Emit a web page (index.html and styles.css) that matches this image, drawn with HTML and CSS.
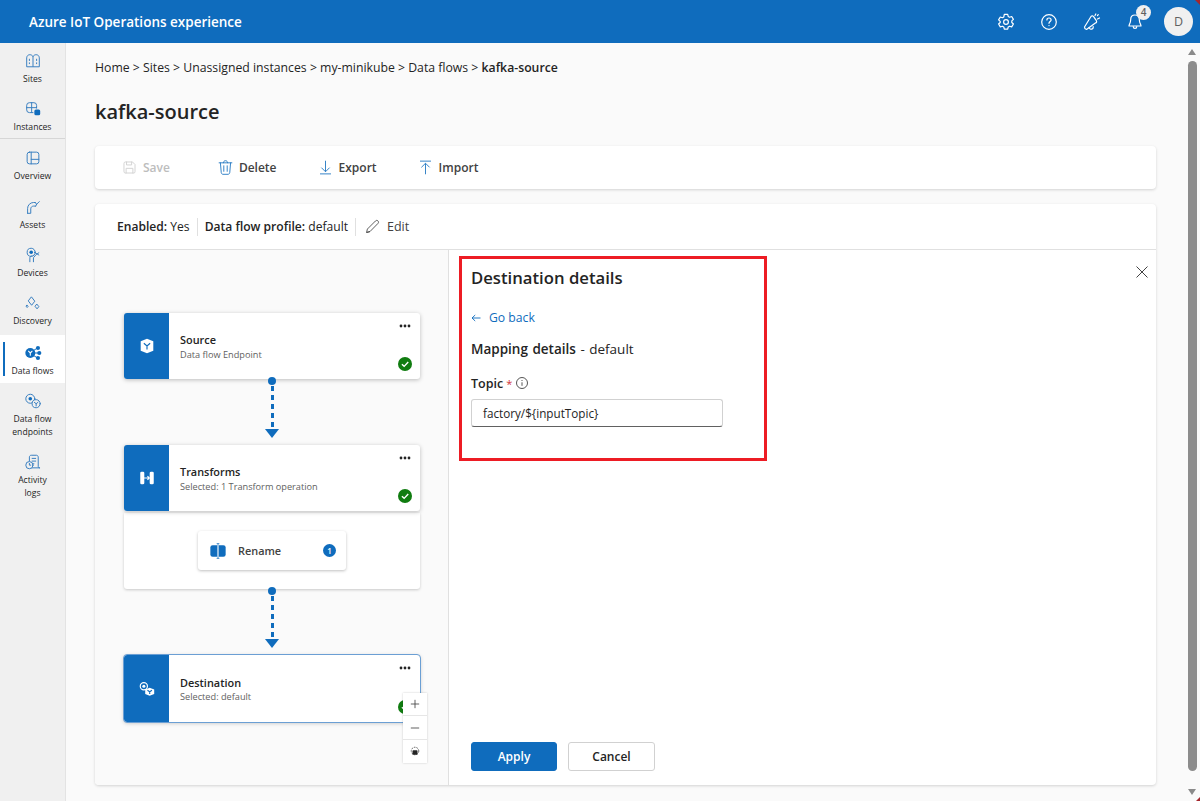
FILE: index.html
```html
<!DOCTYPE html>
<html lang="en">
<head>
  <meta charset="UTF-8">
  <title>Azure IoT Operations experience</title>
  <link rel="stylesheet" href="styles.css">
</head>
<body>
  <header class="topbar">
    <div class="brand">Azure IoT Operations experience</div>
    <div class="top-actions">
      <svg class="top-icon" viewBox="0 0 20 20"><path d="M8.300 2.300h3.400l.5 2.100 1.400.8 2.100-.7 1.700 2.900-1.600 1.500v1.600l1.600 1.500-1.700 2.900-2.100-.7-1.400.8-.5 2.100H8.300l-.5-2.100-1.400-.8-2.100.7-1.700-2.900 1.600-1.500V9.400L2.600 7.900l1.700-2.900 2.100.7 1.400-.8z"/><circle cx="10" cy="10" r="2.400"/></svg>
      <svg class="top-icon" viewBox="0 0 20 20"><circle cx="10" cy="10" r="7.300"/><path d="M7.900 8c0-1.300 1-2 2.100-2s2.100.8 2.100 1.900c0 1.600-2.100 1.700-2.100 3.400"/><circle class="dot" cx="10" cy="13.600" r=".7"/></svg>
      <svg class="top-icon" viewBox="0 0 20 20"><path d="M2.500 15 9 4.500c1-1.200 2-.8 2.800.3l2.400 3.500c.8 1.300.5 2.400-.8 2.700L4.500 17.500c-1.200-.2-2-1.300-2-2.500z"/><path d="M7 15.500c.3 1.500 2 2.200 3.500 1.200.6-.4.900-1.200.7-2.200"/><path d="M13 3.500l.8-1.500M15.500 7l2-1M15.500 3.500l.8-.8"/></svg>
      <div class="bell">
        <svg class="top-icon" viewBox="0 0 20 20"><path d="M10 3c-2.800 0-4.300 2-4.300 4.500 0 3.500-1.700 5-1.700 6.500h12c0-1.500-1.700-3-1.700-6.500C14.300 5 12.800 3 10 3z"/><path d="M8.200 14.500c0 1.200.8 1.900 1.800 1.900s1.800-.7 1.800-1.900"/></svg>
        <span class="bell-count">4</span>
      </div>
      <div class="avatar">D</div>
    </div>
  </header>

  <div class="shell">
    <nav class="sidenav">
      <a class="nav-item">
        <svg class="nav-icon" viewBox="0 0 20 20"><path d="M3 16V6.500C3 4.500 4.500 3 6.500 3c1.500 0 2.800.8 3.500 2 .7-1.200 2-2 3.500-2C15.500 3 17 4.500 17 6.500V16zM10 5v11M6 8v1.500M6 12v1M14 8v1.500M14 12v1"/></svg>
        <span>Sites</span>
      </a>
      <a class="nav-item nav-last">
        <svg class="nav-icon" viewBox="0 0 20 20"><path d="M10 14H6a3 3 0 0 1-3-3V6a3 3 0 0 1 3-3h5a3 3 0 0 1 3 3v3M3 8.500h11M8.500 3v11"/><rect class="solid" x="11.500" y="10.500" width="6.500" height="6.500" rx="1.800"/></svg>
        <span>Instances</span>
      </a>
      <a class="nav-item nav-tall">
        <svg class="nav-icon" viewBox="0 0 20 20"><rect x="3.500" y="3.500" width="13" height="13" rx="2.500"/><path d="M8 3.500v13M8 11.500h8.500"/></svg>
        <span>Overview</span>
      </a>
      <a class="nav-item">
        <svg class="nav-icon" viewBox="0 0 20 20"><path d="M4 17v-5.500C4 8 7 5 10.500 5h2M4 17h3.500v-5c0-1.800 1.500-3 3-3h2.500M12.500 5l1.500 2 3-3M13 9l1-2"/></svg>
        <span>Assets</span>
      </a>
      <a class="nav-item">
        <svg class="nav-icon" viewBox="0 0 20 20"><circle cx="8" cy="7" r="4.500"/><circle class="solid" cx="8" cy="7" r="2"/><path d="M6.500 17.500v-4c0-1.500 1-2.500 2.500-2.500M10.500 17.500V13l3-3.500 3-2M11.500 7l5 3"/></svg>
        <span>Devices</span>
      </a>
      <a class="nav-item nav-before-active">
        <svg class="nav-icon" viewBox="0 0 20 20"><path d="M8.500 3.500 12 8l-3.500 4.500L5 8zM14.500 11.500l2 2.500-2 2.500-2-2.500zM3.500 12.500l1 1.300-1 1.200-1-1.200z"/></svg>
        <span>Discovery</span>
      </a>
      <a class="nav-item active">
        <svg class="nav-icon filled" viewBox="0 0 20 20"><circle cx="7" cy="10" r="5.500"/><circle cx="15.500" cy="4.500" r="2.300"/><circle cx="17" cy="10" r="2.300"/><circle cx="15.500" cy="15.500" r="2.300"/><path class="link" d="M11 7l3-2M12 10h4M11 13l3 2"/><path class="cut" d="M5 8l2 2 2-2M7 10v2.500"/></svg>
        <span>Data flows</span>
      </a>
      <a class="nav-item">
        <svg class="nav-icon" viewBox="0 0 20 20"><circle cx="7" cy="7.500" r="5"/><circle class="solid" cx="7" cy="7.500" r="2"/><circle class="bg-fill" cx="13.500" cy="13" r="4.500"/><path d="M11.500 11.500l2 1.500 2-1.500M13.500 13v2.500"/></svg>
        <span>Data flow<br>endpoints</span>
      </a>
      <a class="nav-item">
        <svg class="nav-icon" viewBox="0 0 20 20"><path d="M6 9V4.500C6 3.500 6.800 2.500 8 2.500h6c1 0 1.800 1 1.800 2v10.500c0 1.300 1 1.500 2 1.500H8M9 6h4M9 9h4M9 12h2"/><circle class="bg-fill" cx="6" cy="13.500" r="4"/><path d="M6 11.500v2h1.500"/></svg>
        <span>Activity<br>logs</span>
      </a>
    </nav>

    <main class="content">
      <div class="breadcrumb">Home &gt; Sites &gt; Unassigned instances &gt; my-minikube &gt; Data flows &gt; <b>kafka-source</b></div>
      <h1 class="page-title">kafka-source</h1>

      <div class="toolbar">
        <button class="tool disabled">
          <svg class="tool-icon" viewBox="0 0 20 20"><path d="M3.500 5a1.500 1.500 0 0 1 1.500-1.500h8.500l3 3V15a1.500 1.500 0 0 1-1.500 1.500H5A1.500 1.500 0 0 1 3.500 15zM6.500 3.500v3.500h6V3.500M6 16.500v-5.500h8v5.500"/></svg>
          Save
        </button>
        <button class="tool">
          <svg class="tool-icon" viewBox="0 0 20 20"><path d="M2.500 4.500h15M7.500 4.500C7.500 3 8.500 2 10 2s2.500 1 2.500 2.500M4 4.500l1 11.500c.1 1 .9 2 2 2h6c1.100 0 1.900-1 2-2l1-11.500M8 8v6.500M12 8v6.500"/></svg>
          Delete
        </button>
        <button class="tool">
          <svg class="tool-icon" viewBox="0 0 20 20"><path d="M4 17.500h12M10 2.500v12M5.500 10.500l4.500 4.500 4.500-4.500"/></svg>
          Export
        </button>
        <button class="tool">
          <svg class="tool-icon" viewBox="0 0 20 20"><path d="M4 2.500h12M10 17.500v-12M5.500 9.500 10 5l4.500 4.500"/></svg>
          Import
        </button>
      </div>

      <section class="card">
        <div class="card-head">
          <span class="meta"><b>Enabled:</b> Yes</span>
          <span class="meta"><b>Data flow profile:</b> default</span>
          <span class="meta-edit">
            <svg class="edit-icon" viewBox="0 0 20 20"><path d="M3 17l1-4L13.500 3.500c1-1 2.300-.9 3 0s.8 2-.1 2.900L7 16z"/><path d="M3 17l4-1"/></svg>
            Edit
          </span>
        </div>

        <div class="card-body">
          <div class="canvas">
            <div class="node">
              <div class="node-side"><svg class="node-glyph" viewBox="0 0 20 20"><path class="wht" d="M10 2 17 4.800v10.400L10 18 3 15.200V4.800z"/><path class="blu" d="M6.500 7 10 10l3.500-3M10 10v4"/></svg></div>
              <div class="node-text"><div class="node-name">Source</div><div class="node-sub">Data flow Endpoint</div></div>
              <svg class="more" viewBox="0 0 12 4"><circle cx="2" cy="2" r="1.400"/><circle cx="6" cy="2" r="1.400"/><circle cx="10" cy="2" r="1.400"/></svg>
              <span class="check"><svg viewBox="0 0 10 10"><path d="M2.800 5.200 4.400 6.700 7.300 3.600"/></svg></span>
            </div>

            <div class="connector"><i class="pin"></i><i class="dash"></i><i class="arrow"></i></div>

            <div class="node">
              <div class="node-side"><svg class="node-glyph" viewBox="0 0 20 20"><rect class="wht" x="2.500" y="3" width="4.500" height="14" rx="1.500"/><rect class="wht" x="13" y="3" width="4.500" height="14" rx="1.500"/><path class="line-w" d="M6 10h6.500M10.500 8l2 2-2 2"/></svg></div>
              <div class="node-text"><div class="node-name">Transforms</div><div class="node-sub">Selected: 1 Transform operation</div></div>
              <svg class="more" viewBox="0 0 12 4"><circle cx="2" cy="2" r="1.400"/><circle cx="6" cy="2" r="1.400"/><circle cx="10" cy="2" r="1.400"/></svg>
              <span class="check"><svg viewBox="0 0 10 10"><path d="M2.800 5.200 4.400 6.700 7.300 3.600"/></svg></span>
            </div>
            <div class="transform-box">
              <div class="op">
                <svg class="op-icon" viewBox="0 0 20 20"><path d="M9 3.500H4A2.500 2.500 0 0 0 1.500 6v8A2.500 2.500 0 0 0 4 16.500h5z"/><path d="M11 3.500h5A2.500 2.500 0 0 1 18.500 6v8a2.500 2.500 0 0 1-2.500 2.500h-5z"/><path class="thin" d="M8.500 1.800h3M8.500 18.200h3M10 1.800v16.400"/></svg>
                <span class="op-name">Rename</span>
                <span class="op-count">1</span>
              </div>
            </div>

            <div class="connector"><i class="pin"></i><i class="dash"></i><i class="arrow"></i></div>

            <div class="node selected">
              <div class="node-side"><svg class="node-glyph" viewBox="0 0 20 20"><circle class="line-w" cx="6.500" cy="7" r="4"/><circle class="wht" cx="6.500" cy="7" r="1.700"/><path class="wht" d="M13 8.500 18 10.500v5L13 17.500 8 15.500v-5z"/><path class="blu" d="M10.500 11.500 13 13l2.500-1.500M13 13v2.500"/></svg></div>
              <div class="node-text"><div class="node-name">Destination</div><div class="node-sub">Selected: default</div></div>
              <svg class="more" viewBox="0 0 12 4"><circle cx="2" cy="2" r="1.400"/><circle cx="6" cy="2" r="1.400"/><circle cx="10" cy="2" r="1.400"/></svg>
              <span class="check"><svg viewBox="0 0 10 10"><path d="M2.800 5.200 4.400 6.700 7.300 3.600"/></svg></span>
            </div>

            <div class="zoom-ctrl">
              <button class="zoom-btn"><svg viewBox="0 0 12 12"><path d="M6 1v10M1 6h10"/></svg></button>
              <button class="zoom-btn"><svg viewBox="0 0 12 12"><path d="M1 6h10"/></svg></button>
              <button class="zoom-btn"><svg viewBox="0 0 12 12"><circle cx="6" cy="6" r="4.500" stroke-dasharray="2 1.200"/><rect class="lock" x="3" y="5" width="6" height="5.500" rx="1"/></svg></button>
            </div>
          </div>

          <aside class="details">
            <svg class="close" viewBox="0 0 12 12"><path d="M.5.500l11 11M11.500.500l-11 11"/></svg>
            <h2 class="details-title">Destination details</h2>
            <a class="back"><svg class="back-arrow" viewBox="0 0 10 10"><path d="M9.500 5H1M4.200 2 1 5l3.200 3"/></svg>Go back</a>
            <div class="mapping"><b>Mapping details</b> - default</div>
            <label class="field-label"><b>Topic</b> <em>*</em>
              <svg class="info" viewBox="0 0 14 14"><circle cx="7" cy="7" r="5.500"/><path d="M7 6.300v3.500M7 4v1"/></svg>
            </label>
            <div class="text-input">factory/${inputTopic}</div>
            <div class="details-foot">
              <button class="btn primary">Apply</button>
              <button class="btn">Cancel</button>
            </div>
          </aside>
        </div>
      </section>
    </main>

    <div class="scrollbar">
      <i class="sb-up"></i>
      <i class="sb-thumb"></i>
      <i class="sb-down"></i>
    </div>
  </div>

  <div class="callout"></div>
  <i class="corner corner-top"></i>
  <i class="corner corner-bottom"></i>
</body>
</html>
```

FILE: styles.css
```css
* {
  box-sizing: border-box;
}

html, body {
  margin: 0;
  height: 801px;
  overflow: hidden;
}

body {
  font-family: "Open Sans", "Liberation Sans", sans-serif;
  font-size: 12.5px;
  color: #242424;
  background-color: #fafafa;
}

button {
  font: inherit;
  color: inherit;
  background: none;
  border: 0;
  padding: 0;
}

b {
  font-weight: 600;
}

/* top bar */
.topbar {
  height: 43px;
  background-color: #0f6cbd;
  color: #fff;
  display: flex;
  align-items: center;
  justify-content: space-between;
  padding: 0 7px 0 29px;
}

.brand {
  font-size: 13.5px;
  font-weight: 600;
}

.top-actions {
  display: flex;
  align-items: center;
  gap: 23px;
}

.top-icon {
  width: 20px;
  height: 20px;
  display: block;
  fill: none;
  stroke: #fff;
  stroke-width: 1.2;
  stroke-linejoin: round;
  stroke-linecap: round;
}

.top-icon .dot {
  fill: #fff;
  stroke: none;
}

.bell {
  position: relative;
}

.bell-count {
  position: absolute;
  top: -7px;
  left: 11px;
  width: 15px;
  height: 15px;
  border-radius: 50%;
  background-color: #f0f0f0;
  color: #616161;
  font-size: 10px;
  font-weight: 600;
  line-height: 15px;
  text-align: center;
}

.avatar {
  width: 29px;
  height: 29px;
  margin-left: -4px;
  border-radius: 50%;
  background-color: #f0f0f0;
  color: #616161;
  font-size: 12.5px;
  line-height: 29px;
  text-align: center;
}

/* layout under the bar */
.shell {
  display: flex;
  height: 758px;
}

.sidenav {
  width: 66px;
  flex: none;
  background-color: #f0f0f0;
  border-right: 1px solid #e3e3e3;
}

.nav-item {
  position: relative;
  display: flex;
  flex-direction: column;
  align-items: center;
  padding: 9px 2px 5.500px;
  font-size: 8.6px;
  line-height: 13px;
  text-align: center;
  color: #242424;
}

.nav-item span {
  margin-top: 2.500px;
}

.nav-last {
  border-bottom: 1px solid #d6d6d6;
  padding-bottom: 4.500px;
}

.nav-tall {
  padding-top: 10px;
  padding-bottom: 6.500px;
}

.nav-before-active {
  padding-bottom: 7.500px;
}

.nav-item.active {
  background-color: #fff;
}

.nav-item.active::before {
  content: "";
  position: absolute;
  left: 3px;
  top: 7px;
  width: 2px;
  height: 34px;
  background-color: #0f6cbd;
}

.nav-icon {
  width: 18px;
  height: 18px;
  fill: none;
  stroke: #3a7fc0;
  stroke-width: 1.1;
  stroke-linejoin: round;
  stroke-linecap: round;
}

.nav-icon .solid {
  fill: #0f6cbd;
  stroke: none;
}

.nav-icon .bg-fill {
  fill: #f0f0f0;
}

.nav-icon.filled circle {
  fill: #0f6cbd;
  stroke: none;
}

.nav-icon .link {
  stroke: #0f6cbd;
}

.nav-icon .cut {
  stroke: #fff;
  stroke-width: 1.2;
}

/* main column */
.content {
  flex: 1;
  padding: 15px 29px 0;
  min-width: 0;
}

.breadcrumb {
  line-height: 20px;
  font-size: 12.250px;
}

.page-title {
  margin: 19px 0 0;
  font-size: 20px;
  line-height: 30px;
  font-weight: 600;
}

.toolbar {
  margin-top: 19px;
  height: 43px;
  background-color: #fff;
  border-radius: 4px;
  box-shadow: 0 1px 3px rgba(0, 0, 0, 0.16);
  display: flex;
  align-items: center;
  padding-left: 26px;
  gap: 40px;
}

.tool {
  display: flex;
  align-items: center;
  gap: 5px;
  font-weight: 600;
  font-size: 12px;
  color: #424242;
}

.tool-icon {
  width: 17px;
  height: 17px;
  fill: none;
  stroke: #2a7cc4;
  stroke-width: 1.1;
  stroke-linecap: round;
  stroke-linejoin: round;
}

.tool.disabled {
  color: #bdbdbd;
  margin-right: 7px;
}

.tool.disabled .tool-icon {
  stroke: #d1d1d1;
}

.card {
  margin-top: 15px;
  height: 581px;
  background-color: #fff;
  border-radius: 4px;
  box-shadow: 0 1px 3px rgba(0, 0, 0, 0.16);
  display: flex;
  flex-direction: column;
}

.card-head {
  height: 46px;
  flex: none;
  border-bottom: 1px solid #e0e0e0;
  display: flex;
  align-items: center;
  padding-left: 22px;
  font-size: 12.100px;
}

.meta {
  padding-right: 7px;
  margin-right: 7px;
  border-right: 1px solid #e0e0e0;
  line-height: 18px;
}

.meta-edit {
  display: flex;
  align-items: center;
  gap: 6px;
  margin-left: 1px;
  color: #424242;
  font-size: 12.5px;
}

.edit-icon {
  width: 17px;
  height: 17px;
  fill: none;
  stroke: #424242;
  stroke-width: 1;
  stroke-linejoin: round;
}

.card-body {
  flex: 1;
  display: flex;
  min-height: 0;
}

/* flow diagram */
.canvas {
  position: relative;
  width: 354px;
  flex: none;
  background-color: #fafafa;
  border-right: 1px solid #e0e0e0;
  border-bottom-left-radius: 4px;
  padding: 63px 0 0 29px;
}

.node {
  position: relative;
  width: 296px;
  height: 66px;
  background-color: #fff;
  border-radius: 3px;
  box-shadow: 0 1px 4px rgba(0, 0, 0, 0.25);
  display: flex;
}

.node.selected {
  height: 67px;
  outline: 1px solid #6b9fd4;
}

.node-side {
  width: 45px;
  flex: none;
  background-color: #0f6cbd;
  border-radius: 3px 0 0 3px;
  display: flex;
  align-items: center;
  justify-content: center;
}

.node-glyph {
  width: 18px;
  height: 18px;
}

.node-glyph .wht {
  fill: #fff;
}

.node-glyph .blu {
  fill: none;
  stroke: #0f6cbd;
  stroke-width: 1.3;
}

.node-glyph .line-w {
  fill: none;
  stroke: #fff;
  stroke-width: 1.3;
}

.node-text {
  padding: 19px 0 0 11px;
}

.selected .node-text {
  padding-top: 20px;
}

.node-name {
  font-size: 10.900px;
  line-height: 16px;
  font-weight: 600;
}

.selected .node-name {
  line-height: 15px;
}

.node-sub {
  font-size: 9.200px;
  line-height: 13px;
  color: #616161;
}

.more {
  position: absolute;
  top: 11px;
  right: 9px;
  width: 12px;
  height: 4px;
  fill: #242424;
}

.check {
  position: absolute;
  right: 8px;
  bottom: 8px;
  width: 14px;
  height: 14px;
  border-radius: 50%;
  background-color: #107c10;
}

.check svg {
  display: block;
  fill: none;
  stroke: #fff;
  stroke-width: 1;
}

.connector {
  width: 296px;
  height: 66px;
  position: relative;
}

.pin {
  position: absolute;
  left: 144px;
  top: -2px;
  width: 8px;
  height: 8px;
  border-radius: 50%;
  background-color: #0f6cbd;
}

.dash {
  position: absolute;
  left: 146.500px;
  top: 7px;
  width: 3px;
  height: 42px;
  background: repeating-linear-gradient(#0f6cbd 0 5px, transparent 5px 9px);
}

.arrow {
  position: absolute;
  left: 141px;
  top: 50px;
  width: 0;
  height: 0;
  border-style: solid;
  border-width: 9px 7px 0;
  border-color: #0f6cbd transparent transparent;
}

.transform-box {
  width: 296px;
  height: 76px;
  margin-top: 2px;
  background-color: #fff;
  border-radius: 0 0 3px 3px;
  box-shadow: 0 1px 3px rgba(0, 0, 0, 0.2);
  padding: 18px 0 0 74px;
}

.op {
  width: 148px;
  height: 39px;
  background-color: #fff;
  border-radius: 3px;
  box-shadow: 0 1px 3px rgba(0, 0, 0, 0.25);
  display: flex;
  align-items: center;
  padding: 0 10px 0 11px;
}

.op-icon {
  width: 18px;
  height: 18px;
  fill: #0f6cbd;
}

.op-icon .thin {
  fill: none;
  stroke: #0f6cbd;
  stroke-width: 0.8;
}

.op-name {
  margin-left: 11px;
  font-size: 10.900px;
  font-weight: 600;
  color: #424242;
}

.op-count {
  margin-left: auto;
  width: 13px;
  height: 13px;
  border-radius: 50%;
  background-color: #0f6cbd;
  color: #fff;
  font-size: 8px;
  font-weight: 600;
  line-height: 13px;
  text-align: center;
}

.zoom-ctrl {
  position: absolute;
  left: 308px;
  top: 443px;
  width: 24px;
  background-color: #fff;
  box-shadow: 0 0 2px rgba(0, 0, 0, 0.2);
}

.zoom-btn {
  display: flex;
  align-items: center;
  justify-content: center;
  width: 24px;
  height: 23.400px;
  border-bottom: 1px solid #e6e6e6;
}

.zoom-btn:last-child {
  border-bottom: 0;
}

.zoom-btn svg {
  width: 10px;
  height: 10px;
  fill: none;
  stroke: #424242;
  stroke-width: 1;
}

.zoom-btn .lock {
  fill: #242424;
  stroke: none;
}

/* side panel */
.details {
  position: relative;
  flex: 1;
  padding: 16px 22px 14px;
  display: flex;
  flex-direction: column;
  align-items: flex-start;
}

.close {
  position: absolute;
  top: 16px;
  right: 8px;
  width: 12px;
  height: 12px;
  fill: none;
  stroke: #424242;
  stroke-width: 1;
}

.details-title {
  margin: 0;
  font-size: 16.700px;
  line-height: 24px;
  font-weight: 600;
}

.back {
  margin-top: 19px;
  display: flex;
  align-items: center;
  color: #0f6cbd;
  font-size: 12.200px;
  line-height: 18px;
}

.back-arrow {
  width: 10px;
  height: 10px;
  margin-right: 8px;
  fill: none;
  stroke: #0f6cbd;
  stroke-width: 0.9;
}

.mapping {
  margin-top: 13px;
  line-height: 18px;
  font-size: 13.500px;
  word-spacing: 1px;
}

.field-label {
  margin-top: 17px;
  display: flex;
  align-items: center;
  gap: 3px;
  line-height: 18px;
}

.field-label em {
  color: #d13438;
  font-style: normal;
  font-size: 11px;
}

.info {
  width: 14px;
  height: 14px;
  fill: none;
  stroke: #424242;
  stroke-width: 0.9;
  margin-top: -2px;
}

.text-input {
  margin-top: 6px;
  width: 252px;
  height: 28px;
  border: 1px solid #d1d1d1;
  border-bottom-color: #616161;
  border-radius: 3px;
  padding: 0 11px;
  font-size: 11.700px;
  line-height: 26px;
}

.details-foot {
  margin-top: auto;
  display: flex;
  gap: 11px;
}

.btn {
  width: 87px;
  height: 29px;
  border: 1px solid #d1d1d1;
  border-radius: 3px;
  background-color: #fff;
  font-size: 12px;
  font-weight: 600;
}

.btn.primary {
  width: 86px;
  background-color: #0f6cbd;
  border-color: #0f6cbd;
  color: #fff;
}

/* page scrollbar */
.scrollbar {
  position: relative;
  width: 15px;
  flex: none;
}

.sb-up, .sb-down {
  position: absolute;
  left: 3px;
  width: 0;
  height: 0;
  border-style: solid;
  border-color: transparent;
}

.sb-up {
  top: 6px;
  border-width: 0 4.500px 6px;
  border-bottom-color: #8a8a8a;
}

.sb-down {
  bottom: 6px;
  border-width: 6px 4.500px 0;
  border-top-color: #8a8a8a;
}

.sb-thumb {
  position: absolute;
  left: 3px;
  top: 18px;
  width: 9px;
  height: 710px;
  border-radius: 5px;
  background-color: #8c8c8c;
}

/* annotation drawn over the screenshot */
.callout {
  position: absolute;
  left: 459px;
  top: 256px;
  width: 308px;
  height: 205px;
  border: 3px solid #ed1c24;
}

/* window corners showing through at the screenshot's edge */
.corner {
  position: absolute;
  right: 0;
  width: 0;
  height: 0;
  border-style: solid;
  border-color: transparent;
}

.corner-top {
  top: 0;
  border-width: 5px 0 0 5px;
  border-top-color: #a4262c;
}

.corner-bottom {
  bottom: 0;
  border-width: 0 0 4px 4px;
  border-bottom-color: #a4262c;
}
```
